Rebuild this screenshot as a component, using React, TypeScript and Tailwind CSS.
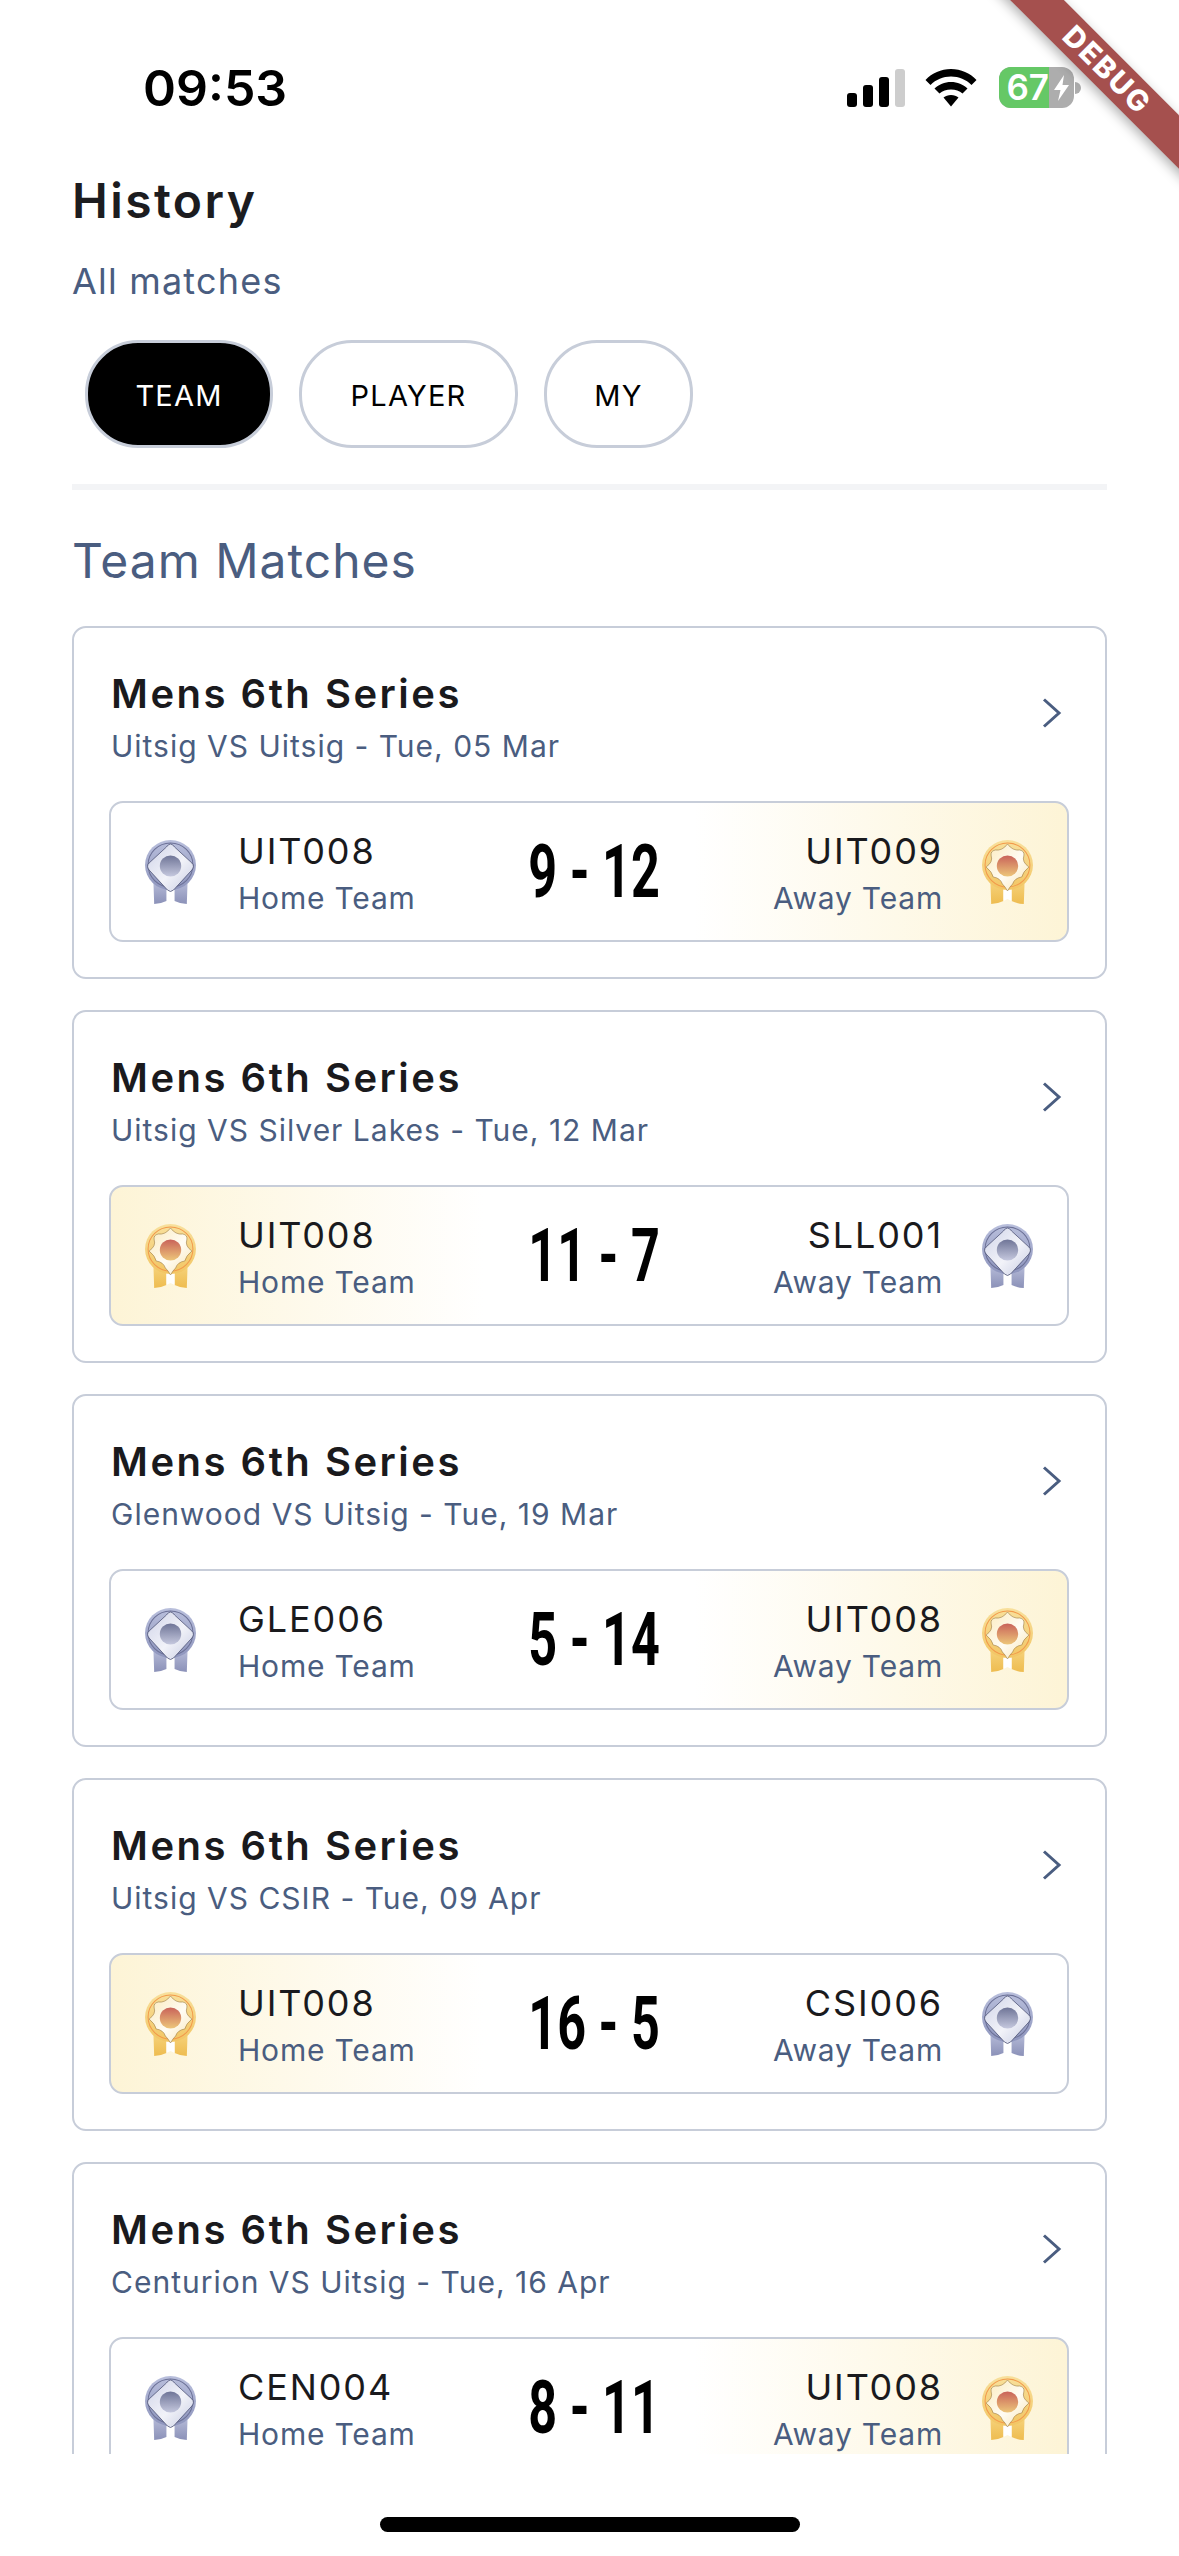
import React from "react";

type M = { sub: string; home: string; away: string; score: string; win: "home" | "away" };

const matches: M[] = [
  { sub: "Uitsig VS Uitsig - Tue, 05 Mar", home: "UIT008", away: "UIT009", score: "9 - 12", win: "away" },
  { sub: "Uitsig VS Silver Lakes - Tue, 12 Mar", home: "UIT008", away: "SLL001", score: "11 - 7", win: "home" },
  { sub: "Glenwood VS Uitsig - Tue, 19 Mar", home: "GLE006", away: "UIT008", score: "5 - 14", win: "away" },
  { sub: "Uitsig VS CSIR - Tue, 09 Apr", home: "UIT008", away: "CSI006", score: "16 - 5", win: "home" },
  { sub: "Centurion VS Uitsig - Tue, 16 Apr", home: "CEN004", away: "UIT008", score: "8 - 11", win: "away" },
];

function Medal({ gold }: { gold: boolean }) {
  const p = gold ? "g" : "s";
  return (
    <svg width="53" height="66" viewBox="0 0 52 66" preserveAspectRatio="none" className="shrink-0">
      <defs>
        <linearGradient id={p + "rib"} x1="0" y1="0" x2="0" y2="1">
          <stop offset="0" stopColor={gold ? "#f8d988" : "#c3c8e2"} />
          <stop offset="1" stopColor={gold ? "#eebc50" : "#8b91b8"} />
        </linearGradient>
        <linearGradient id={p + "disc"} x1="0" y1="0" x2="0" y2="1">
          <stop offset="0" stopColor={gold ? "#f8e09c" : "#b9bfdc"} />
          <stop offset="1" stopColor={gold ? "#f2c563" : "#8e95bd"} />
        </linearGradient>
        <linearGradient id={p + "star"} x1="0" y1="0" x2="1" y2="1">
          <stop offset="0" stopColor={gold ? "#fbeabb" : "#cfd3e8"} />
          <stop offset="0.55" stopColor={gold ? "#fffcf4" : "#f2f3f9"} />
          <stop offset="1" stopColor={gold ? "#f8e4b0" : "#c6cbe2"} />
        </linearGradient>
        <linearGradient id={p + "core"} x1="0" y1="0" x2="0" y2="1">
          <stop offset="0" stopColor={gold ? "#c9635a" : "#6f7597"} />
          <stop offset="1" stopColor={gold ? "#edc67a" : "#c5c8de"} />
        </linearGradient>
      </defs>
      <path
        d="M9 36 L10 65 Q16 65 22 62 L22 46 Z M43 36 L42 65 Q36 65 30 62 L30 46 Z"
        fill={`url(#${p}rib)`}
      />
      {gold && <path d="M22 50 L30 50 L30 62 L26 60 L22 62 Z" fill="#ffffff" />}
      <circle cx="26" cy="26" r="25" fill={`url(#${p}disc)`} />
      <circle cx="26" cy="26" r="22" fill="none" stroke={gold ? "#f2994a" : "#6b7096"} strokeWidth="1" />
      {gold ? (
        <path
          d="M26 5 Q31 12 38 11 Q43 12 42 17 Q40 23 47 28 Q41 33 40 38 Q33 39 31 45 Q28 48 26 52 Q24 48 21 45 Q19 39 12 38 Q11 33 5 28 Q12 23 10 17 Q9 12 14 11 Q21 12 26 5 Z"
          fill={`url(#${p}star)`}
          stroke="#8a6a35"
          strokeWidth="0.5"
        />
      ) : (
        <path
          d="M26 5 Q28 5 30 8 L47 24 Q50 27 47 31 L29 51 Q26 54 23 51 L5 31 Q2 27 5 24 L22 8 Q24 5 26 5 Z"
          fill={`url(#${p}star)`}
          stroke="#3f4468"
          strokeWidth="0.7"
        />
      )}
      <circle cx="26" cy="27" r="10.5" fill={`url(#${p}core)`} />
    </svg>
  );
}

function Card({ m }: { m: M }) {
  const bg =
    m.win === "away"
      ? "bg-[linear-gradient(90deg,#ffffff_61%,#fdf4d6_100%)]"
      : "bg-[linear-gradient(90deg,#fdf4d6_0%,#ffffff_39%)]";
  return (
    <div className="h-[353px] shrink-0 rounded-[14px] border-2 border-[#c7cdd9] bg-white pt-[42px] pr-[36px] pl-[35px]">
      <div className="flex items-start justify-between pr-[7px] pl-[2px]">
        <div className="flex flex-col">
          <div className="h-[48px] text-[40px] leading-[48px] font-semibold tracking-[2.5px] text-[#1a1a1d]">Mens 6th Series</div>
          <div className="mt-[8px] h-[40px] text-[30px] leading-[40px] tracking-[1px] text-[#4a5d80]">{m.sub}</div>
        </div>
        <svg width="20" height="32" viewBox="0 0 20 32" fill="none" className="mt-[27px] shrink-0">
          <path d="M2 2.5 L17 16 L2 29.5" stroke="#4a5d80" strokeWidth="3" />
        </svg>
      </div>
      <div className={`mt-[35px] grid h-[141px] grid-cols-3 items-center rounded-[14px] border-2 border-[#c7cdd9] px-[33px] ${bg}`}>
        <div className="flex items-center gap-[41px]">
          <Medal gold={m.win === "home"} />
          <div className="flex flex-col whitespace-nowrap">
            <div className="h-[44px] pt-[3px] text-[36px] leading-[44px] tracking-[1.9px] text-[#1a1a1d]">{m.home}</div>
            <div className="mt-[8px] h-[40px] text-[30px] leading-[40px] tracking-[0.8px] text-[#4a5d80]">Home Team</div>
          </div>
        </div>
        <div className="scale-x-[0.68] whitespace-nowrap pl-[14px] text-center font-['Roboto',sans-serif] text-[74px] leading-none font-bold text-black">
          {m.score}
        </div>
        <div className="flex items-center justify-end gap-[38px]">
          <div className="flex flex-col items-end whitespace-nowrap">
            <div className="h-[44px] pt-[3px] text-[36px] leading-[44px] tracking-[1.9px] text-[#1a1a1d]">{m.away}</div>
            <div className="mt-[8px] h-[40px] text-[30px] leading-[40px] tracking-[0.8px] text-[#4a5d80]">Away Team</div>
          </div>
          <Medal gold={m.win === "away"} />
        </div>
      </div>
    </div>
  );
}

function StatusIcons() {
  return (
    <div className="flex items-center gap-[20px]">
      <svg width="58" height="38" viewBox="0 0 58 38">
        <rect x="0" y="24" width="10" height="14" rx="3" fill="#000" />
        <rect x="16" y="16" width="10" height="22" rx="3" fill="#000" />
        <rect x="32" y="8" width="10" height="30" rx="3" fill="#000" />
        <rect x="48" y="0" width="10" height="38" rx="3" fill="#cdcdcd" />
      </svg>
      <svg width="52" height="38" viewBox="0 0 52 38" className="mr-[2px]">
        <path d="M26 0 C36 0 45 4 51.5 11 L46.5 16 C41 10.5 34 7.5 26 7.5 C18 7.5 11 10.5 5.5 16 L0.5 11 C7 4 16 0 26 0 Z" fill="#000" />
        <path d="M26 13 C32.5 13 38 15.5 42.5 19.5 L37.5 24.5 C34.5 22 30.5 20.5 26 20.5 C21.5 20.5 17.5 22 14.5 24.5 L9.5 19.5 C14 15.5 19.5 13 26 13 Z" fill="#000" />
        <path d="M26 26 C29 26 31.5 27 33.5 28.5 L26 37.5 L18.5 28.5 C20.5 27 23 26 26 26 Z" fill="#000" />
      </svg>
      <div className="flex items-center">
        <div className="flex h-[41px] w-[75px] overflow-hidden rounded-[12px] bg-[#adadad]">
          <div className="flex w-[50px] items-center justify-end bg-[#65c866] text-[35px] leading-none font-semibold text-white">67</div>
          <svg width="25" height="41" viewBox="0 0 25 41">
            <path d="M15 8 L5 23 L11.5 23 L9 34 L20 18 L13.5 18 Z" fill="#fff" />
          </svg>
        </div>
        <div className="ml-[1px] h-[12px] w-[6px] rounded-r-[6px] bg-[#adadad]" />
      </div>
    </div>
  );
}

export default function App() {
  return (
    <div className="relative flex h-[2556px] w-[1179px] flex-col overflow-hidden bg-white font-['Inter',sans-serif]">
      <div className="flex h-[167px] shrink-0 items-start justify-between pt-[60px] pr-[98px] pl-[143px]">
        <div className="text-[50px] leading-[56px] font-semibold text-black">09:53</div>
        <div className="pt-[7px]"><StatusIcons /></div>
      </div>
      <div className="flex h-[2287px] shrink-0 flex-col overflow-hidden px-[72px]">
        <div className="h-[68px] text-[48px] leading-[68px] font-semibold tracking-[2.4px] text-[#1c1c1f]">History</div>
        <div className="mt-[22px] h-[48px] text-[36px] leading-[48px] tracking-[1.2px] text-[#4a5d80]">All matches</div>
        <div className="mt-[35px] flex gap-[26px] pl-[13px] text-[29px] tracking-[1.2px]">
          <div className="flex h-[108px] w-[188px] items-center justify-center rounded-[53px] border-[3px] border-[#c7cdd9] bg-black pt-[3px] text-white">TEAM</div>
          <div className="flex h-[108px] w-[219px] items-center justify-center rounded-[53px] border-[3px] border-[#c7cdd9] pt-[3px] text-black">PLAYER</div>
          <div className="flex h-[108px] w-[149px] items-center justify-center rounded-[53px] border-[3px] border-[#c7cdd9] pt-[3px] text-black">MY</div>
        </div>
        <div className="mt-[36px] h-[6px] shrink-0 bg-[#f3f4f6]" />
        <div className="mt-[41px] h-[60px] text-[48px] leading-[60px] tracking-[1px] text-[#4a5d80]">Team Matches</div>
        <div className="mt-[35px] flex flex-col gap-[31px]">
          {matches.map((m, i) => (
            <Card key={i} m={m} />
          ))}
        </div>
      </div>
      <div className="mt-[63px] flex justify-center">
        <div className="h-[15px] w-[420px] rounded-full bg-black" />
      </div>
      <div className="absolute top-[51px] left-[907px] flex h-[38px] w-[400px] rotate-45 items-center justify-center bg-[#a5504e] text-[29px] font-extrabold tracking-[2px] text-white shadow-[0_4px_12px_rgba(0,0,0,0.3)]">
        DEBUG
      </div>
    </div>
  );
}
